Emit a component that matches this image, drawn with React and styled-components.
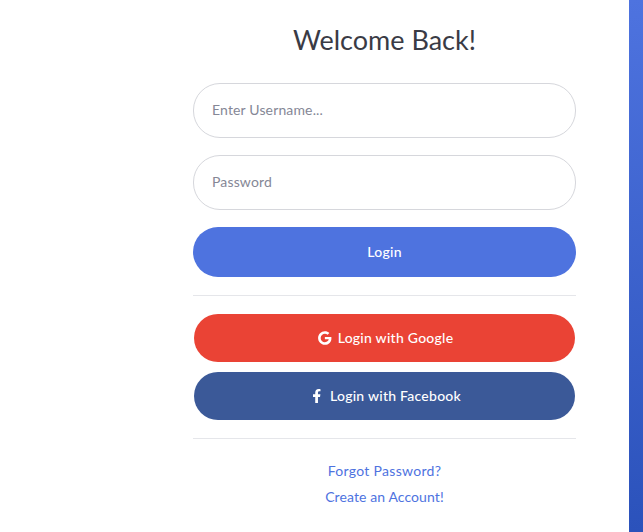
import React from "react";
import styled, { createGlobalStyle } from "styled-components";
import { FaGoogle, FaFacebookF } from "react-icons/fa";

const GlobalStyle = createGlobalStyle`
  html, body {
    margin: 0;
    height: 100%;
    background: #fff;
  }
  body {
    font-family: "Lato", "Noto Sans", sans-serif;
    overflow: hidden;
  }
`;

const Page = styled.div`
  display: flex;
  height: 532px;
`;

const Main = styled.main`
  flex: 1;
  padding: 24px 53px 0 193px;
`;

const Strip = styled.div`
  width: 14px;
  background: linear-gradient(180deg, #4e73df 0%, #2b52bb 100%);
`;

const Title = styled.h1`
  margin: 0 0 27px;
  font-size: 27px;
  line-height: 32px;
  font-weight: 400;
  text-align: center;
  color: #3a3b45;
`;

const Form = styled.form`
  display: flex;
  flex-direction: column;
`;

const Input = styled.input`
  box-sizing: border-box;
  width: 100%;
  height: 54.5px;
  margin-bottom: 17.5px;
  padding: 0 18px 2px;
  border: 1px solid #d6d7dc;
  border-radius: 27px;
  font: inherit;
  font-size: 14px;
  letter-spacing: 0.15px;
  color: #6e707e;
  outline: none;

  &::placeholder {
    color: #858796;
    opacity: 1;
  }
`;

const Button = styled.button`
  display: flex;
  align-items: center;
  justify-content: center;
  gap: 4.5px;
  box-sizing: border-box;
  width: ${(p) => (p.$inset ? "381px" : "100%")};
  height: ${(p) => (p.$inset ? 48 : 50)}px;
  margin: 0 auto ${(p) => p.$after || 0}px;
  padding: 0 0 1px;
  border: none;
  border-radius: 25px;
  background: ${(p) => p.$color};
  color: #fff;
  font: inherit;
  font-size: 14px;
  font-weight: 500;
  letter-spacing: 0.25px;

  svg {
    width: 17.5px;
    height: 14px;
  }
`;

const Divider = styled.hr`
  width: 100%;
  margin: ${(p) => p.$top}px 0 ${(p) => p.$bottom}px;
  border: none;
  border-top: 1px solid #e5e6ea;
`;

const Links = styled.div`
  display: flex;
  flex-direction: column;
  align-items: center;
  gap: 8px;
`;

const TextLink = styled.a`
  font-size: 14px;
  line-height: 18px;
  letter-spacing: ${(p) => p.$spacing}px;
  color: #4e73df;
  text-decoration: none;
`;

export default function App() {
  return (
    <>
      <GlobalStyle />
      <Page>
        <Main>
          <Title>Welcome Back!</Title>
          <Form>
            <Input placeholder="Enter Username..." />
            <Input placeholder="Password" type="password" />
            <Button type="button" $color="#4e73df">Login</Button>
            <Divider $top={18} $bottom={18} />
            <Button type="button" $inset $after={10} $color="#ea4335">
              <FaGoogle />
              Login with Google
            </Button>
            <Button type="button" $inset $color="#3b5998">
              <FaFacebookF />
              Login with Facebook
            </Button>
            <Divider $top={18} $bottom={23} />
          </Form>
          <Links>
            <TextLink href="#" $spacing={0.3}>Forgot Password?</TextLink>
            <TextLink href="#" $spacing={0.1}>Create an Account!</TextLink>
          </Links>
        </Main>
        <Strip />
      </Page>
    </>
  );
}
